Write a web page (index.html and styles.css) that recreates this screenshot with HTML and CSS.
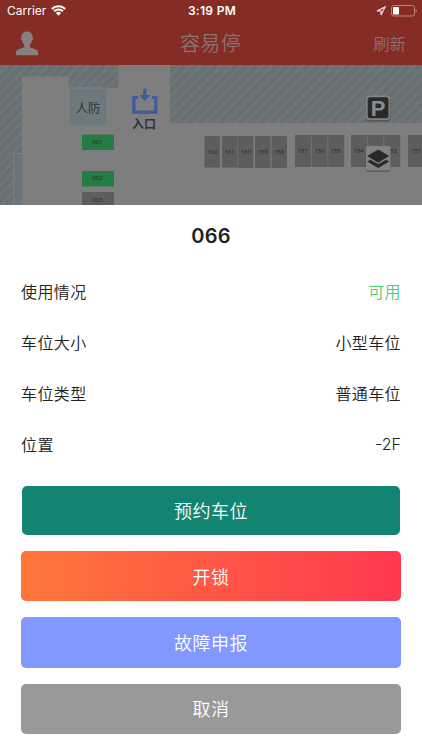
FILE: index.html
```html
<!DOCTYPE html>
<html lang="zh-CN">
<head>
  <meta charset="UTF-8">
  <title>容易停</title>
  <meta name="viewport" content="width=device-width, initial-scale=1.0">
  <link rel="stylesheet" href="styles.css">
</head>
<body>

  <!-- 顶部 -->
  <header class="header">
    <div class="status-bar">
      <div class="status-left">
        <span>Carrier</span>
        <svg class="wifi" viewBox="0 0 15 11" width="15" height="11">
          <path d="M.8 4a9.500 9.500 0 0 1 13.400 0M3 6.300a6.400 6.400 0 0 1 9 0" fill="none" stroke="#fff" stroke-width="1.900"/>
          <path d="M4.900 8.100a3.700 3.700 0 0 1 5.200 0L7.500 10.700z" fill="#fff"/>
        </svg>
      </div>
      <span class="time">3:19 PM</span>
      <div class="status-right">
        <svg viewBox="0 0 10 10" width="10" height="10">
          <path d="M.9 5 9.1.9 5 9.1V5z" fill="none" stroke="#f0e2e0" stroke-width="1.200"/>
        </svg>
        <svg viewBox="0 0 26 12" width="26" height="12">
          <rect x=".5" y=".5" width="23" height="10.500" rx="2.200" fill="none" stroke="#b98481"/>
          <rect x="2" y="2" width="6" height="7.500" rx=".8" fill="#fff"/>
          <path d="M24.700 4q1.200.5 1.200 1.700t-1.200 1.700z" fill="#b98481"/>
        </svg>
      </div>
    </div>
    <div class="nav-bar">
      <svg class="user" viewBox="0 0 24 26" width="24" height="26">
        <path d="M12 1.500c3.900 0 5.700 2.500 5.600 6 1 .5.500 2.700-.600 3-.300 1.900-1.100 3.100-2.200 4.100v2.300c1.600 1.400 5.300 1.800 7.100 3.200 1 .9 1.300 2.600 1.300 5.100H.8c0-2.500.3-4.200 1.300-5.100 1.800-1.400 5.500-1.800 7.100-3.200v-2.300c-1.100-1-1.900-2.200-2.200-4.100-1.100-.3-1.600-2.500-.6-3C6.300 4 8.100 1.500 12 1.500z" fill="#848180"/>
      </svg>
      <h1 class="title">容易停</h1>
      <span class="refresh">刷新</span>
    </div>
  </header>

  <!-- 停车场地图 -->
  <svg class="map" viewBox="0 65 422 140" width="422" height="140">
    <defs>
      <pattern id="hatch" width="7.2" height="7.2" patternUnits="userSpaceOnUse" patternTransform="rotate(45)">
        <rect width="7.2" height="7.2" fill="#697073"/>
        <rect width="2.6" height="7.2" fill="#707678"/>
      </pattern>
    </defs>
    <rect y="65" width="422" height="140" fill="url(#hatch)"/>
    <path d="M22 205V76.500H68.500V88H118.500V65H170V123H422V205z" fill="#7e7e7e"/>
    <path d="M13.500 205V153.500H23V205z" fill="#6c7578" stroke="#767f82"/>
    <rect x="69" y="88" width="38" height="38" fill="#6f787c" stroke="#77858b"/>
    <text class="room" x="88" y="113">人防</text>

    <!-- 入口 -->
    <path d="M138 97.500h-4.200v14.600h22V97.500H152" fill="none" stroke="#405a9b" stroke-width="3.200"/>
    <path d="M143.200 88.500h3.200v6.500h4l-5.600 6-5.600-6h4z" fill="#405a9b"/>
    <text class="entry" x="144" y="128.500">入口</text>

    <g fill="#267c42">
      <rect x="82" y="134.500" width="32" height="15.500"/>
      <rect x="82" y="171" width="32" height="15.500"/>
    </g>
    <g fill="#5d5d5d">
      <rect x="82" y="192" width="32" height="13"/>
      <rect x="204.500" y="136" width="15.500" height="31.500"/>
      <rect x="222" y="136" width="15.500" height="31.500"/>
      <rect x="238" y="136" width="15.500" height="32"/>
      <rect x="255" y="136" width="15.500" height="32"/>
      <rect x="271.500" y="136" width="15.500" height="32"/>
      <rect x="295" y="135" width="16" height="32"/>
      <rect x="311.600" y="135" width="16" height="32"/>
      <rect x="328.200" y="135" width="16" height="32"/>
      <rect x="351" y="135" width="16" height="32"/>
      <rect x="367.600" y="135" width="16" height="32"/>
      <rect x="384.200" y="135" width="16" height="32"/>
      <rect x="408" y="135" width="16" height="32"/>
    </g>
    <g class="spot">
      <text x="97.500" y="144">001</text>
      <text x="97.500" y="180.300">002</text>
      <text x="97.500" y="202">003</text>
      <text x="212.500" y="154">162</text>
      <text x="229.500" y="154">161</text>
      <text x="246" y="154">160</text>
      <text x="262.500" y="154">159</text>
      <text x="279" y="154">158</text>
      <text x="302.500" y="153">157</text>
      <text x="319.500" y="153">156</text>
      <text x="335.500" y="153">155</text>
      <text x="358.500" y="153">154</text>
      <text x="375" y="153">153</text>
      <text x="392" y="153">152</text>
      <text x="416.500" y="153">151</text>
    </g>

    <!-- 浮动按钮 -->
    <rect x="366" y="97" width="24.500" height="24.500" rx="3" fill="#555"/>
    <rect x="366" y="95.500" width="24" height="24.500" rx="3" fill="#828282"/>
    <rect x="367.700" y="97.200" width="20.800" height="21" rx="2.500" fill="#292929"/>
    <text class="parking" x="378.200" y="115.700">P</text>
    <rect x="366" y="147.500" width="24.500" height="24.300" rx="2" fill="#555"/>
    <rect x="366" y="146" width="24.500" height="24.500" rx="2" fill="#828282"/>
    <path d="M378.200 149.500l11 6.600-11 6.600-11-6.600z" fill="#292929"/>
    <path d="M367.200 161.600l3.200-1.900 7.800 4.500 7.800-4.500 3.200 1.900-11 6.500z" fill="#292929"/>
  </svg>

  <!-- 车位详情 -->
  <main class="sheet">
    <h2 class="number">066</h2>
    <dl class="info">
      <div class="row"><dt>使用情况</dt><dd class="free">可用</dd></div>
      <div class="row"><dt>车位大小</dt><dd>小型车位</dd></div>
      <div class="row"><dt>车位类型</dt><dd>普通车位</dd></div>
      <div class="row"><dt>位置</dt><dd class="floor">-2F</dd></div>
    </dl>
    <div class="buttons">
      <button class="button reserve">预约车位</button>
      <button class="button unlock">开锁</button>
      <button class="button report">故障申报</button>
      <button class="button cancel">取消</button>
    </div>
  </main>

</body>
</html>
```
FILE: styles.css
```css
* {
  margin: 0;
  padding: 0;
  box-sizing: border-box;
}
body {
  width: 422px;
  height: 750px;
  overflow: hidden;
  font-family: Inter, "Noto Sans CJK SC", sans-serif;
  background: #fff;
  color: #222;
}

/* 顶部 */
.header {
  height: 65px;
  background: #852c25;
}
.status-bar {
  display: grid;
  grid-template-columns: 1fr auto 1fr;
  align-items: center;
  height: 21px;
  padding: 0 5px 0 7px;
  color: #fff;
  font-size: 12px;
}
.status-left,
.status-right {
  display: flex;
  align-items: center;
  gap: 5px;
}
.status-right {
  justify-content: flex-end;
}
.time {
  font-size: 12px;
  font-weight: 600;
  letter-spacing: 0.3px;
}
.nav-bar {
  display: grid;
  grid-template-columns: 1fr auto 1fr;
  align-items: center;
  height: 43px;
  padding: 0 16px 0 15px;
  color: #8c716e;
}
.title {
  font-size: 20px;
  font-weight: 350;
  letter-spacing: 0.4px;
}
.refresh {
  justify-self: end;
  font-size: 16.4px;
  font-weight: 350;
}

/* 地图 */
.map {
  display: block;
}
.map text {
  text-anchor: middle;
  fill: #303436;
}
.map .room {
  font-size: 12.2px;
}
.map .entry {
  font-size: 12px;
  font-weight: 700;
}
.map .spot text {
  font-family: "Open Sans", sans-serif;
  font-size: 5.8px;
  font-weight: 500;
  fill: #252525;
}
.map .parking {
  font: 700 22px "Liberation Sans", sans-serif;
  fill: #8b8b8b;
}

/* 车位详情 */
.sheet {
  height: 545px;
  padding: 0 21px;
}
.number {
  height: 60px;
  line-height: 62px;
  text-align: center;
  font-size: 20px;
  font-weight: 600;
  letter-spacing: 0.2px;
}
.row {
  display: flex;
  align-items: center;
  justify-content: space-between;
  height: 51px;
  font-size: 16px;
  font-weight: 350;
  letter-spacing: 0.4px;
}
.floor {
  letter-spacing: 0;
}
.free {
  color: #4ccb70;
}

/* 按钮 */
.buttons {
  display: flex;
  flex-direction: column;
  gap: 16px;
  padding-top: 17px;
}
.button {
  height: 50.4px;
  padding-bottom: 1px;
  border: none;
  border-radius: 5px;
  color: #fff;
  font-family: inherit;
  font-size: 18px;
  font-weight: 350;
  letter-spacing: 0.5px;
}
.reserve {
  height: 49px;
  margin: 0 1px;
  background: #128572;
}
.unlock {
  background: linear-gradient(90deg, #ff773a, #ff3850);
}
.report {
  background: #8098ff;
}
.cancel {
  background: #999;
}
```
